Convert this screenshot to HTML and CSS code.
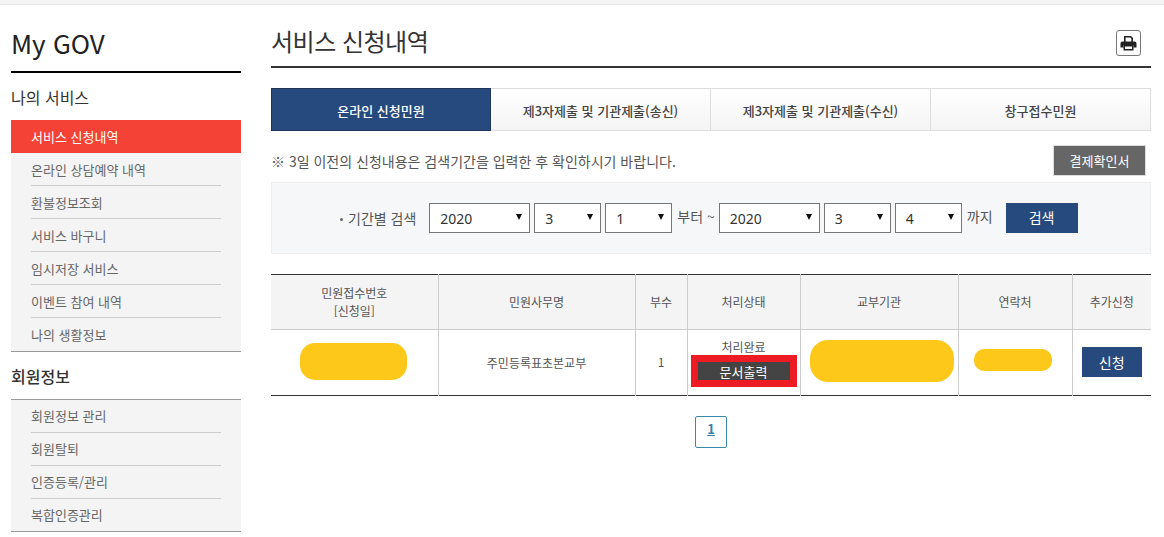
FILE: index.html
```html
<!DOCTYPE html>
<html lang="ko">
<head>
    <meta charset="UTF-8">
    <title>서비스 신청내역</title>
    <link rel="stylesheet" href="styles.css">
</head>
<body>
    <div class="topbar"></div>
    <div class="wrap">
        <div class="side">
            <h2 class="side-title">My GOV</h2>
            <h3 class="side-head">나의 서비스</h3>
            <ul class="side-menu">
                <li class="on"><a>서비스 신청내역</a></li>
                <li><a>온라인 상담예약 내역</a></li>
                <li><a>환불정보조회</a></li>
                <li><a>서비스 바구니</a></li>
                <li><a>임시저장 서비스</a></li>
                <li><a>이벤트 참여 내역</a></li>
                <li><a>나의 생활정보</a></li>
            </ul>
            <h3 class="side-head member">회원정보</h3>
            <ul class="side-menu lined">
                <li><a>회원정보 관리</a></li>
                <li><a>회원탈퇴</a></li>
                <li><a>인증등록/관리</a></li>
                <li><a>복합인증관리</a></li>
            </ul>
        </div>
        <div class="main">
            <div class="title">
                <h1>서비스 신청내역</h1>
                <button class="print" aria-label="인쇄">
                    <svg width="17" height="16" viewBox="0 0 17 16">
                        <path d="M4 7V1h7l2 2v4h-1.600V3.800L10.300 2.600H5.600V7z" fill="#222"/>
                        <path d="M2.500 6.500h12A2 2 0 0 1 16.500 8.500v4h-3V10h-10v2.500h-3v-4a2 2 0 0 1 2-2z" fill="#222"/>
                        <path d="M3.500 10h10v5.500h-10zM5 11.500V14h7v-2.500z" fill="#222"/>
                    </svg>
                </button>
            </div>
            <div class="tabs">
                <a class="tab on">온라인 신청민원</a>
                <a class="tab">제3자제출 및 기관제출(송신)</a>
                <a class="tab">제3자제출 및 기관제출(수신)</a>
                <a class="tab">창구접수민원</a>
            </div>
            <div class="notice">
                <p>※ 3일 이전의 신청내용은 검색기간을 입력한 후 확인하시기 바랍니다.</p>
                <button class="btn-gray">결제확인서</button>
            </div>
            <div class="search">
                <span class="search-label">기간별 검색</span>
                <span class="sel year"><select><option>2020</option></select></span>
                <span class="sel"><select><option>3</option></select></span>
                <span class="sel"><select><option>1</option></select></span>
                <span class="word">부터 ~</span>
                <span class="sel year"><select><option>2020</option></select></span>
                <span class="sel"><select><option>3</option></select></span>
                <span class="sel"><select><option>4</option></select></span>
                <span class="word">까지</span>
                <button class="btn-search">검색</button>
            </div>
            <table class="list">
                <colgroup>
                    <col style="width:167px">
                    <col style="width:197px">
                    <col style="width:52px">
                    <col style="width:113px">
                    <col style="width:158px">
                    <col style="width:114px">
                    <col style="width:79px">
                </colgroup>
                <thead>
                    <tr>
                        <th>민원접수번호<br>[신청일]</th>
                        <th>민원사무명</th>
                        <th>부수</th>
                        <th>처리상태</th>
                        <th>교부기관</th>
                        <th>연락처</th>
                        <th>추가신청</th>
                    </tr>
                </thead>
                <tbody>
                    <tr>
                        <td><span class="mask mask-no"></span></td>
                        <td>주민등록표초본교부</td>
                        <td class="count">1</td>
                        <td class="state">처리완료<button class="btn-doc">문서출력</button></td>
                        <td><span class="mask mask-org"></span></td>
                        <td><span class="mask mask-tel"></span></td>
                        <td><button class="btn-add">신청</button></td>
                    </tr>
                </tbody>
            </table>
            <div class="paging"><a>1</a></div>
        </div>
    </div>
</body>
</html>
```

FILE: styles.css
```css
*{
    margin: 0;
    padding: 0;
    box-sizing: border-box;
}
body{
    font-family: "Noto Sans CJK KR", "Noto Sans", sans-serif;
    font-size: 13px;
    color: #444;
    background-color: #fff;
    height: 537px;
    overflow: hidden;
}
ul{
    list-style: none;
}
button{
    border: none;
    font-family: inherit;
}
.topbar{
    height: 5px;
    background-color: #f4f4f4;
    border-bottom: 1px solid #e9e9e9;
}
.wrap{
    display: flex;
    padding-left: 11px;
}

/* side */
.side{
    width: 230px;
    margin-right: 30px;
}
.side-title{
    height: 68px;
    padding-top: 18px;
    border-bottom: 2px solid #000;
    font-size: 26px;
    line-height: 40px;
    font-weight: 400;
    color: #222;
}
.side-head{
    height: 47px;
    padding-top: 12px;
    font-size: 16px;
    line-height: 24px;
    font-weight: 400;
    color: #333;
}
.side-head.member{
    padding-top: 12px;
    font-weight: 500;
}
.side-menu{
    background-color: #f4f4f4;
    border-bottom: 1px solid #999;
}
.side-menu.lined{
    border-top: 1px solid #999;
}
.side-menu li{
    height: 33px;
    padding: 0 20px;
}
.side-menu a{
    display: block;
    height: 33px;
    border-bottom: 1px solid #ccc;
    font-size: 13px;
    line-height: 34px;
    color: #666;
}
.side-menu li:last-child a{
    border-bottom: none;
}
.side-menu.lined a{
    line-height: 32px;
}
.side-menu.lined li:last-child{
    height: 32px;
}
.side-menu li.on{
    background-color: #f44336;
}
.side-menu li.on a{
    color: #fff;
    border-bottom: none;
}

/* main */
.main{
    width: 880px;
}
.title{
    display: flex;
    justify-content: space-between;
    height: 63px;
    padding-top: 18px;
    border-bottom: 2px solid #333;
}
.title h1{
    font-size: 24px;
    line-height: 36px;
    font-weight: 400;
    color: #333;
    letter-spacing: -0.5px;
}
.print{
    width: 25px;
    height: 26px;
    margin: 7px 10px 0 0;
    background-color: #fff;
    border: 1px solid #777;
    border-radius: 3px;
    display: flex;
    align-items: center;
    justify-content: center;
}
.tabs{
    display: flex;
    margin-top: 20px;
    height: 43px;
}
.tab{
    flex: 0 0 220px;
    border: 1px solid #ddd;
    border-left: none;
    background: linear-gradient(#fff, #f4f4f4);
    text-align: center;
    font-size: 13px;
    line-height: 43px;
    font-weight: 500;
    color: #444;
}
.tab.on{
    background: #264a7e;
    border: 1px solid #1c3558;
    color: #fff;
}
.notice{
    display: flex;
    justify-content: space-between;
    align-items: center;
    height: 31px;
    margin-top: 14px;
    padding-right: 5px;
}
.notice p{
    font-size: 14px;
    color: #555;
}
.btn-gray{
    width: 93px;
    height: 31px;
    background-color: #666;
    border: 1px solid #ddd;
    color: #fff;
    font-size: 13px;
}
.search{
    display: flex;
    align-items: center;
    height: 72px;
    margin-top: 6px;
    padding-left: 67px;
    background-color: #f6f7f9;
    border: 1px solid #eee;
    font-size: 14px;
}
.search-label{
    margin-right: 13px;
    padding-left: 9px;
    position: relative;
    color: #555;
}
.search-label::before{
    content: "";
    position: absolute;
    left: 1px;
    top: 10px;
    width: 3px;
    height: 3px;
    border-radius: 50%;
    background-color: #666;
}
.sel{
    position: relative;
    width: 67px;
    height: 30px;
    margin-right: 4px;
}
.sel.year{
    width: 101px;
}
.sel::after{
    content: "";
    position: absolute;
    right: 8px;
    top: 11px;
    border-top: 6px solid #111;
    border-left: 3px solid transparent;
    border-right: 3px solid transparent;
}
.sel select{
    appearance: none;
    width: 100%;
    height: 30px;
    padding-left: 10px;
    background-color: #fff;
    border: 1px solid #777;
    border-radius: 0;
    font-family: "Noto Sans", sans-serif;
    font-size: 14px;
    color: #333;
}
.word{
    margin: -4px 4px 0 1px;
    color: #555;
}
.word:last-of-type{
    margin-right: 13px;
}
.btn-search{
    width: 72px;
    height: 30px;
    background-color: #264a7e;
    color: #fff;
    font-size: 14px;
    padding-bottom: 3px;
}
.list{
    width: 880px;
    margin-top: 20px;
    border-collapse: collapse;
    table-layout: fixed;
    border-top: 1px solid #333;
    border-bottom: 1px solid #333;
    font-size: 12px;
}
.list th{
    height: 55px;
    background-color: #f4f4f4;
    font-weight: 400;
    line-height: 18px;
    color: #555;
}
.list td{
    height: 66px;
    text-align: center;
    color: #555;
}
.list th,.list td{
    border-left: 1px solid #ccc;
    border-bottom: 1px solid #ccc;
}
.list tbody tr:last-child td{
    border-bottom: none;
}
.list th:first-child,.list td:first-child{
    border-left: none;
}
.count{
    padding-bottom: 2px;
}
.mask{
    display: block;
    background-color: #fdc81a;
}
.mask-no{
    width: 107px;
    height: 37px;
    margin: -2px 0 0 29px;
    border-radius: 15px;
}
.mask-org{
    width: 144px;
    height: 42px;
    margin: -3px 0 0 9px;
    border-radius: 18px;
}
.mask-tel{
    width: 78px;
    height: 22px;
    margin: -5px 0 0 15px;
    border-radius: 10px;
}
.state{
    line-height: 18px;
}
.btn-doc{
    display: block;
    width: 106px;
    height: 32px;
    margin: -1px auto 0;
    background-color: #444;
    border: 7px solid #ed1c24;
    color: #fff;
    font-size: 13px;
}
.btn-add{
    display: block;
    width: 60px;
    height: 30px;
    margin: -2px auto 0;
    background-color: #264a7e;
    color: #fff;
    font-size: 14px;
}
.paging{
    margin-top: 20px;
    text-align: center;
}
.paging a{
    display: inline-block;
    width: 32px;
    height: 32px;
    border: 1px solid #3a8ab0;
    border-radius: 2px;
    font-size: 13px;
    line-height: 24px;
    font-weight: 700;
    color: #3a7fa5;
    text-decoration: underline;
}
```
